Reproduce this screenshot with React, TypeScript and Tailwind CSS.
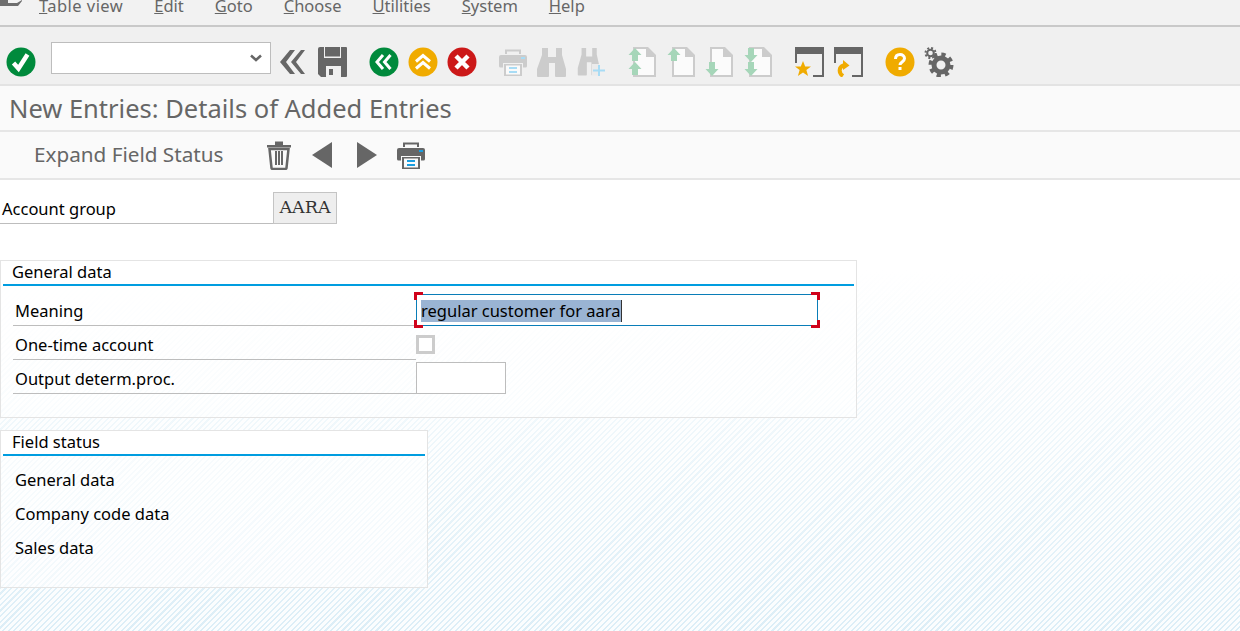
import React from 'react';

const FONT = "font-['Noto_Sans',sans-serif]";
const GRAY = '#666666';
const ARROW = '#a6d6b9';
const MENU = ['Table view', 'Edit', 'Goto', 'Choose', 'Utilities', 'System', 'Help'];

function Box({ className = '', children }: { className?: string; children: React.ReactNode }) {
  return (
    <svg viewBox="0 0 30 30" className={`w-[30px] h-[30px] shrink-0 ${className}`}>
      {children}
    </svg>
  );
}

function Circle({ color, className, children }: { color: string; className?: string; children: React.ReactNode }) {
  return (
    <Box className={className}>
      <circle cx="15" cy="15" r="14.5" fill={color} />
      {children}
    </Box>
  );
}

function Printer({ body, detail, className }: { body: string; detail: string; className?: string }) {
  return (
    <Box className={className}>
      <path d="M7 7V2.500h16V7h-2V4.500H9V7z" fill={body} />
      <path d="M3 8h24a2 2 0 0 1 2 2v9a1.500 1.500 0 0 1-1.500 1.500H25V16H5v4.500H2.500A1.500 1.500 0 0 1 1 19v-9a2 2 0 0 1 2-2z" fill={body} />
      <rect x="23" y="10" width="4" height="2" fill={detail} />
      <path d="M6 17h18v12H6z" fill={body} />
      <rect x="8" y="18.500" width="14" height="9" fill="#fafafa" />
      <rect x="11" y="20" width="8" height="2" fill={detail} />
      <rect x="11" y="24" width="8" height="2" fill={detail} />
    </Box>
  );
}

function Binoculars({ color }: { color: string }) {
  return <path d="M5 1h6v9h8V1h6v7l4 14v7a1 1 0 0 1-1 1H19a1 1 0 0 1-1-1V16h-6v13a1 1 0 0 1-1 1H1a1 1 0 0 1-1-1v-7L5 8z" fill={color} />;
}

function ArrowUp({ x, y }: { x: number; y: number }) {
  return <path d={`M${x} ${y}l6.500 7h-3.500v6h-6v-6h-3.500z`} fill={ARROW} />;
}

function ArrowDown({ x, y }: { x: number; y: number }) {
  return <path d={`M${x - 3} ${y}h6v7h3.500l-6.500 7-6.500-7h3.500z`} fill={ARROW} />;
}

function Doc({ className, children }: { className?: string; children: React.ReactNode }) {
  return (
    <Box className={className}>
      <path d="M5 0h15l8 8v22H5z" fill="#cccccc" />
      <path d="M7 2h11v8h8v18H7z" fill="#fbfbfb" />
      {children}
    </Box>
  );
}

function Win({ className, children }: { className?: string; children: React.ReactNode }) {
  return (
    <Box className={className}>
      <path d="M0 0h29v30H18v-2h9V7H2v9H0z" fill={GRAY} />
      {children}
    </Box>
  );
}

function Gear({ className }: { className?: string }) {
  return (
    <Box className={className}>
      <circle cx="17" cy="18" r="7" fill="none" stroke={GRAY} strokeWidth="5" />
      <circle cx="17" cy="18" r="10.500" fill="none" stroke={GRAY} strokeWidth="4" strokeDasharray="4.200 4.050" />
      <circle cx="6.500" cy="6" r="3.300" fill="none" stroke={GRAY} strokeWidth="2" />
      <circle cx="6.500" cy="6" r="5" fill="none" stroke={GRAY} strokeWidth="2" strokeDasharray="2 1.930" />
    </Box>
  );
}

function Panel({ width, children, title }: { width: string; title: string; children: React.ReactNode }) {
  return (
    <section className={`${width} h-[158px] border border-[#e4e4e4] bg-white/60`}>
      <div className="h-[25px] bg-white px-[2px]">
        <div className="h-[25px] border-b-2 border-[#009de0] pl-[9px] text-[16.5px] leading-[22px] text-black">{title}</div>
      </div>
      {children}
    </section>
  );
}

function Corner({ className }: { className: string }) {
  return <span className={`absolute w-[9px] h-[8px] border-[#d0021b] ${className}`} />;
}

function FormLabel({ height, children }: { height: string; children: React.ReactNode }) {
  return (
    <div className={`w-[403px] ${height} ml-[12px] border-b border-[#bdbdbd] pl-[2px] pt-[3px] flex items-center text-[16.5px] text-black`}>
      {children}
    </div>
  );
}

export default function App() {
  return (
    <div className={`${FONT} h-[631px] w-[1240px] overflow-hidden flex flex-col bg-white`}>
      {/* menu bar, cut off at the top of the window */}
      <nav className="h-[27px] shrink-0 bg-[#f2f2f2] border-b-2 border-[#c9c9c9] flex items-start">
        <svg viewBox="0 0 22 6" className="w-[22px] h-[6px] shrink-0">
          <path d="M0 0h8v3h9l5-3v1l-4 5H0z" fill="#6e6e6e" />
          <path d="M10 0h8l-3 2h-5z" fill="#f2f2f2" />
        </svg>
        <div className="ml-[17px] -mt-[6px] flex gap-[31px] text-[16.5px] leading-[24px] text-[#666666]">
          {MENU.map((m, i) => (
            <span key={m} className={i === 0 ? 'tracking-[0.45px]' : ''}>
              <span className="underline">{m[0]}</span>
              {m.slice(1)}
            </span>
          ))}
        </div>
      </nav>

      {/* system toolbar */}
      <div className="h-[59px] shrink-0 bg-[#f0f0f0] border-b-2 border-[#e3e3e3] pt-[13px] flex items-center">
        <Circle color="#008a3c" className="ml-[6px]">
          <path d="M7.500 16l5 5.500L21.500 7.500" fill="none" stroke="#fff" strokeWidth="4.500" />
        </Circle>
        <div className="ml-[15px] mb-[8px] w-[220px] h-[32px] shrink-0 bg-white border border-[#bdbdbd] flex items-center justify-end pr-[8px]">
          <svg viewBox="0 0 12 8" className="w-[12px] h-[8px]">
            <path d="M1 1.500l5 4.500 5-4.500" fill="none" stroke={GRAY} strokeWidth="2.500" />
          </svg>
        </div>
        <Box className="ml-[5px]">
          <path d="M14 3l-10 12 10 12h5L10 15l9-12zM25 3L15 15l10 12h4L20 15l9-12z" fill={GRAY} />
        </Box>
        <Box className="ml-[12px]">
          <path d="M0 2a2 2 0 0 1 2-2h26a1 1 0 0 1 1 1v28a1 1 0 0 1-1 1H3l-3-3z" fill={GRAY} />
          <rect x="6" y="0" width="17" height="11" fill="#f0f0f0" />
          <rect x="7" y="0" width="15" height="9.500" fill={GRAY} />
          <path d="M8 19h15v11H8z" fill="#f0f0f0" />
          <rect x="11" y="22" width="4" height="6" fill={GRAY} />
        </Box>
        <Circle color="#008a3c" className="ml-[21px]">
          <path d="M14 8l-6 7 6 7M21.500 8l-6 7 6 7" fill="none" stroke="#fff" strokeWidth="3" />
        </Circle>
        <Circle color="#f0ab00" className="ml-[9px]">
          <path d="M8 14.500l7-6 7 6M8 21.500l7-6 7 6" fill="none" stroke="#fff" strokeWidth="3" />
        </Circle>
        <Circle color="#cc1919" className="ml-[9px]">
          <path d="M9 9l12 12M21 9L9 21" fill="none" stroke="#fff" strokeWidth="4.500" />
        </Circle>
        <Printer body="#cccccc" detail="#a8dcf5" className="ml-[21px]" />
        <Box className="ml-[9px]">
          <Binoculars color="#cccccc" />
        </Box>
        <Box className="ml-[10px]">
          <g transform="scale(0.76 0.95) translate(1 0)">
            <Binoculars color="#cccccc" />
          </g>
          <rect x="15" y="17" width="14" height="14" fill="#f0f0f0" opacity="0.85" />
          <path d="M16 22.500h12v2H16zM21 18h2v11h-2z" fill="#a8dcf5" />
        </Box>
        <Doc className="ml-[21px]">
          <ArrowUp x={7} y={1} />
          <ArrowUp x={7} y={15} />
        </Doc>
        <Doc className="ml-[9px]">
          <ArrowUp x={7} y={1} />
        </Doc>
        <Doc className="ml-[8px]">
          <ArrowDown x={7} y={15} />
        </Doc>
        <Doc className="ml-[9px]">
          <ArrowDown x={7} y={1} />
          <ArrowDown x={7} y={15} />
        </Doc>
        <Win className="ml-[21px]">
          <path d="M8 14l2.200 5.500H16l-4.600 3.600 1.700 5.900L8 25.500 2.900 29l1.700-5.900L0 19.500h5.800z" fill="#f0ab00" />
        </Win>
        <Win className="ml-[9px]">
          <path d="M9 29C4.500 26 4.500 20 9.500 18.500" fill="none" stroke="#f0ab00" strokeWidth="4" />
          <path d="M9 13l6.500 5.500L9 23z" fill="#f0ab00" />
        </Win>
        <Circle color="#f0ab00" className="ml-[21px]">
          <path d="M10.500 12c0-3 2-4.500 4.500-4.500s4.500 1.500 4.500 4c0 3.500-4.500 3.500-4.500 6.500" fill="none" stroke="#fff" strokeWidth="3" />
          <rect x="13.500" y="20" width="3" height="3" fill="#fff" />
        </Circle>
        <Gear className="ml-[9px]" />
      </div>

      {/* title bar */}
      <div className="h-[46px] shrink-0 bg-[#fafafa] border-b-2 border-[#e6e6e6] pl-[9px] flex items-center text-[#666666] text-[25.5px]">
        New Entries: Details of Added Entries
      </div>

      {/* application toolbar */}
      <div className="h-[48px] shrink-0 bg-[#fafafa] border-b-2 border-[#e6e6e6] flex items-center text-[#666666]">
        <span className="ml-[34px] w-[230px] shrink-0 text-[20.7px]">Expand Field Status</span>
        <Box>
          <path d="M3 5h24v2.500H3zM11 1.500h8V5h-8z" fill={GRAY} />
          <path d="M5.500 9h19l-2 19a1.500 1.500 0 0 1-1.500 1H9a1.500 1.500 0 0 1-1.500-1z" fill="none" stroke={GRAY} strokeWidth="2.500" />
          <path d="M11 11v14h2V11zM14 11v14h2V11zM17 11v14h2V11z" fill={GRAY} />
        </Box>
        <Box className="ml-[13px]">
          <path d="M25 2v26L5 15z" fill={GRAY} />
        </Box>
        <Box className="ml-[15px]">
          <path d="M5 2v26l20-13z" fill={GRAY} />
        </Box>
        <Printer body={GRAY} detail="#1a9ee0" className="ml-[14px]" />
      </div>

      {/* content on the striped background */}
      <main className="flex-1 pt-[12px] bg-[linear-gradient(to_bottom,#ffffff_20%,rgba(255,255,255,0)_100%),repeating-linear-gradient(135deg,#dceef7_0px,#dceef7_1.500px,#fbfdfe_1.500px,#fbfdfe_4px)]">
        <div className="flex items-start h-[32px] text-[16.5px] text-black">
          <div className="w-[273px] h-[32px] border-b border-[#bdbdbd] pl-[2px] pt-[3px] flex items-center">Account group</div>
          <div className="w-[64px] h-[32px] bg-[#eeeeee] border border-[#c4c4c4] flex items-center justify-center pb-[2px] font-['DejaVu_Serif',serif] text-[17.5px] text-[#333333]">
            AARA
          </div>
        </div>

        <div className="mt-[36px]">
          <Panel width="w-[857px]" title="General data">
            <div className="flex pt-[8px] h-[40px]">
              <FormLabel height="h-[32px]">Meaning</FormLabel>
              <div className="relative h-[32px] w-[402px] shrink-0 bg-white border border-[#0a7db8] pl-[4px] pt-[1px] flex items-center text-[16.5px] text-black">
                <span className="bg-[#9ab4d3] leading-[22px] border-r border-[#333333]">regular customer for aara</span>
                <Corner className="-left-[3px] -top-[3px] border-l-[3px] border-t-[3px]" />
                <Corner className="-right-[3px] -top-[3px] border-r-[3px] border-t-[3px]" />
                <Corner className="-left-[3px] -bottom-[3px] border-l-[3px] border-b-[3px]" />
                <Corner className="-right-[3px] -bottom-[3px] border-r-[3px] border-b-[3px]" />
              </div>
            </div>
            <div className="flex h-[34px]">
              <FormLabel height="h-[34px] pb-[0px] !pt-[5px]">One-time account</FormLabel>
              <div className="mt-[9px] w-[19px] h-[19px] bg-white border-[3px] border-[#cccccc]" />
            </div>
            <div className="flex h-[34px]">
              <FormLabel height="h-[34px] !pt-[5px]">Output determ.proc.</FormLabel>
              <div className="mt-[2px] w-[90px] h-[32px] bg-white border border-[#bdbdbd]" />
            </div>
          </Panel>
        </div>

        <div className="mt-[12px]">
          <Panel width="w-[428px]" title="Field status">
            <div className="pt-[7px] pl-[14px] text-[16.5px] text-black">
              {['General data', 'Company code data', 'Sales data'].map(l => (
                <div key={l} className="h-[34px] flex items-center">{l}</div>
              ))}
            </div>
          </Panel>
        </div>
      </main>
    </div>
  );
}
